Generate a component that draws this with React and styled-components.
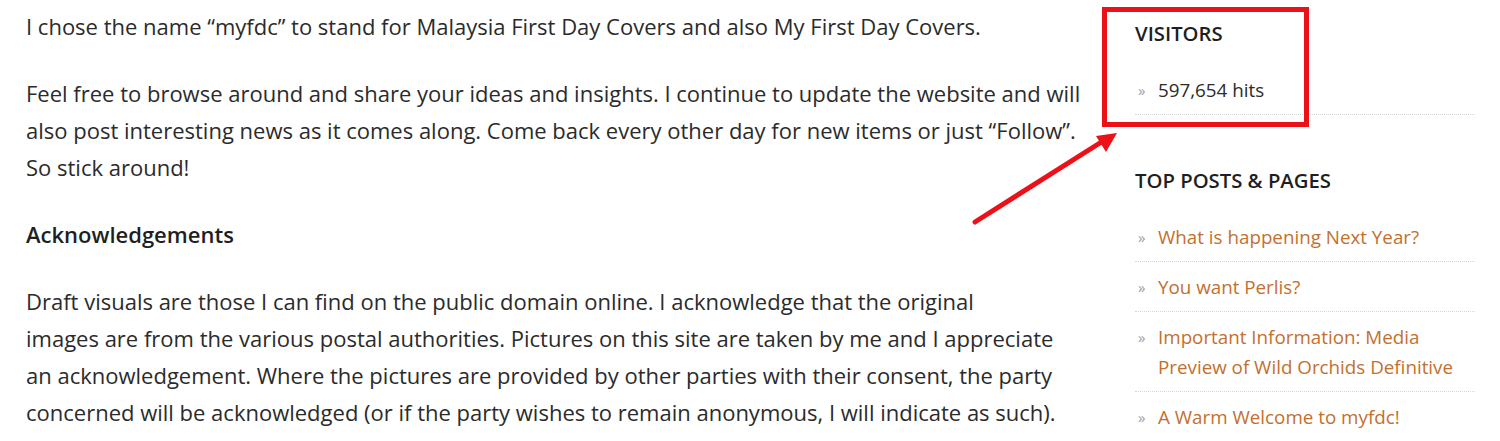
import React from "react";
import styled, { createGlobalStyle } from "styled-components";

const GlobalStyle = createGlobalStyle`
  html, body {
    margin: 0;
    padding: 0;
    background: #fff;
  }
  body {
    font-family: "Open Sans", "Liberation Sans", sans-serif;
    color: #2b2b2b;
  }
`;

const topPosts = [
  { title: "What is happening Next Year?" },
  { title: "You want Perlis?" },
  { title: "Important Information: Media\nPreview of Wild Orchids Definitive" },
  { title: "A Warm Welcome to myfdc!" },
];

const App = () => {
  return (
    <Page>
      <GlobalStyle />
      <Content>
        <Paragraph>
          I chose the name “myfdc” to stand for Malaysia First Day Covers and also My First Day Covers.
        </Paragraph>
        <Paragraph>
          Feel free to browse around and share your ideas and insights. I continue to update the website and will
          <br />
          also post interesting news as it comes along. Come back every other day for new items or just “Follow”.
          <br />
          So stick around!
        </Paragraph>
        <SubHeading>Acknowledgements</SubHeading>
        <Paragraph>
          Draft visuals are those I can find on the public domain online. I acknowledge that the original
          <br />
          images are from the various postal authorities. Pictures on this site are taken by me and I appreciate
          <br />
          an acknowledgement. Where the pictures are provided by other parties with their consent, the party
          <br />
          concerned will be acknowledged (or if the party wishes to remain anonymous, I will indicate as such).
          <br />
          I will try my best to keep the details on this site updated and accurate, but there might be mistakes.
        </Paragraph>
      </Content>

      <Sidebar>
        <Widget>
          <WidgetTitle>Visitors</WidgetTitle>
          <List>
            <Item>
              <Chevron>»</Chevron>
              <Hits>597,654 hits</Hits>
            </Item>
          </List>
        </Widget>
        <Widget>
          <WidgetTitle>Top Posts &amp; Pages</WidgetTitle>
          <List>
            {topPosts.map((post) => (
              <Item key={post.title}>
                <Chevron>»</Chevron>
                <PostLink href="#">{post.title}</PostLink>
              </Item>
            ))}
          </List>
        </Widget>
      </Sidebar>

      <Highlight />
      <Arrow width="160" height="110" viewBox="0 0 160 110">
        <line x1="5" y1="102" x2="133" y2="21" stroke="#ec1018" strokeWidth="5" strokeLinecap="round" />
        <polygon points="147,13 126,16 136,32" fill="#ec1018" />
      </Arrow>
    </Page>
  );
};

export default App;

const Page = styled.div`
  position: relative;
  width: 1500px;
  height: 441px;
  overflow: hidden;
  display: grid;
  grid-template-columns: 1060px 340px;
  column-gap: 49px;
  padding: 8px 0 0 26px;
  box-sizing: border-box;
`;

const Content = styled.main`
  font-size: 22px;
  line-height: 37px;
`;

const Paragraph = styled.p`
  margin: 0 0 30px;
  white-space: nowrap;
`;

const SubHeading = styled.h3`
  margin: 0 0 30px;
  font-size: 22px;
  line-height: 37px;
  font-weight: 600;
  color: #1f1f1f;
`;

const Sidebar = styled.aside`
  padding-top: 10px;
`;

const Widget = styled.section`
  margin-bottom: 50px;
`;

const WidgetTitle = styled.h2`
  margin: 0 0 17px;
  font-size: 20.3px;
  line-height: 30px;
  font-weight: 600;
  text-transform: uppercase;
  color: #1f1f1f;
`;

const List = styled.ul`
  list-style: none;
  margin: 0;
  padding: 0;
`;

const Item = styled.li`
  display: flex;
  align-items: flex-start;
  padding: 10px 0 9px;
  border-bottom: 1px dotted #d6d6d6;
  font-size: 18.8px;
  line-height: 30px;
`;

const Chevron = styled.span`
  width: 23px;
  flex-shrink: 0;
  padding-left: 3px;
  box-sizing: border-box;
  font-size: 15px;
  color: #a0a0a0;
`;

const Hits = styled.span`
  color: #2b2b2b;
`;

const PostLink = styled.a`
  color: #c46f2e;
  text-decoration: none;
  white-space: pre-line;
`;

const Highlight = styled.div`
  position: absolute;
  left: 1102px;
  top: 7px;
  width: 207px;
  height: 120px;
  border: 5px solid #ec1018;
  box-sizing: border-box;
  pointer-events: none;
`;

const Arrow = styled.svg`
  position: absolute;
  left: 970px;
  top: 120px;
  pointer-events: none;
`;
